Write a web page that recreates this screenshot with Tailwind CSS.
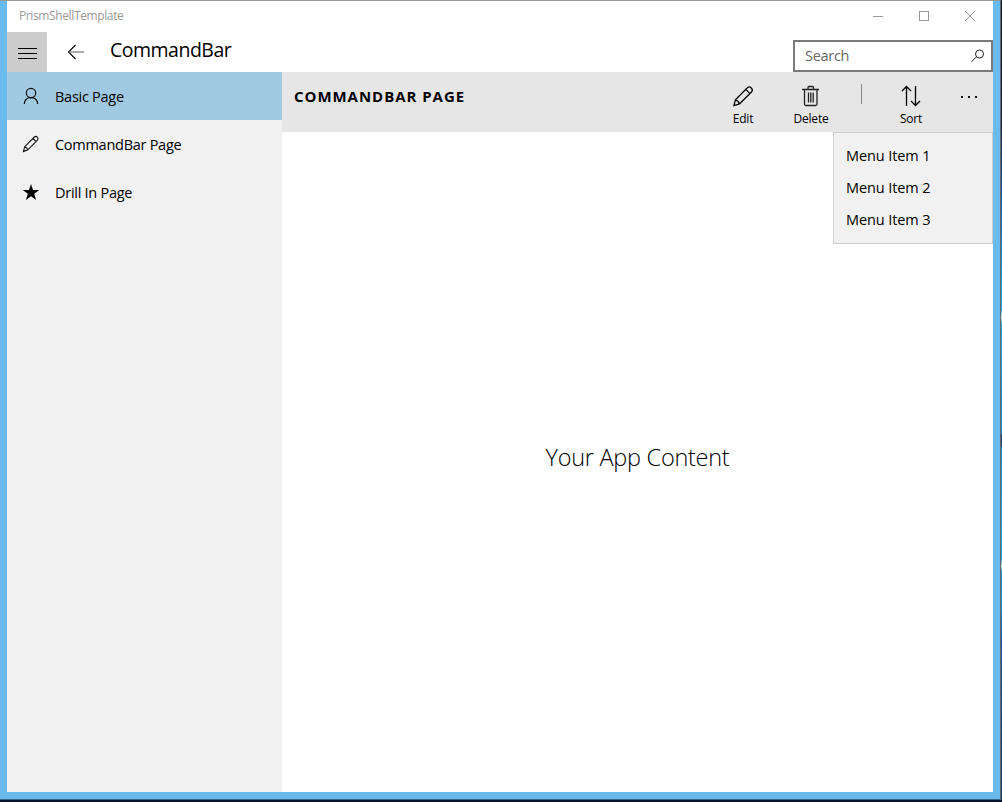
<!DOCTYPE html>
<html lang="en">
<head>
<meta charset="utf-8">
<title>PrismShellTemplate</title>
<script src="https://cdn.jsdelivr.net/npm/@tailwindcss/browser@4"></script>
</head>
<body class="w-[1002px] h-[802px] overflow-hidden bg-[#071d3c] font-['Open_Sans','Noto_Sans',sans-serif] text-black">
<div class="w-full h-full flex flex-col pr-px border-b-2 border-b-[#06152e] bg-[linear-gradient(180deg,#06152e_0px,#0a2b57_130px,#0b60b0_200px,#159ee0_270px,#1da9e0_310px,#d8eef5_317px,#1da9e0_325px,#1593d6_433px,#12407c_436px,#12407c_445px,#159ad9_448px,#1da9e0_560px,#d8eef5_566px,#1593d6_572px,#159ad9_600px,#0d5ba5_640px,#0a3c70_800px)]">
<div class="flex-1 min-h-0 flex flex-col bg-[#69baed] border-r border-t border-b border-r-[#65676b] border-t-[#96979a] border-b-[#35658d] pl-[7px] pr-[7px] pb-[7px]">
  <div class="flex-1 min-h-0 flex flex-col bg-white">
    <header class="h-[31px] shrink-0 flex items-center pl-3 text-[#999999]">
      <span class="text-[12px] leading-4 -mt-px tracking-[-0.38px] whitespace-nowrap flex-1">PrismShellTemplate</span>
      <svg class="w-[138px] h-[31px]" viewBox="0 0 138 31" fill="none" stroke="currentColor" shape-rendering="crispEdges">
        <path d="M18 15.500h10M64.500 10.500h9v9h-9z"/>
        <path d="M110 10l10 10M120 10l-10 10" shape-rendering="auto"/>
      </svg>
    </header>
    <div class="h-10 shrink-0 flex">
      <button class="w-10 h-10 bg-[#cccccc] flex items-center justify-center">
        <svg class="w-10 h-10" viewBox="0 0 40 40" stroke="#000" shape-rendering="crispEdges"><path d="M11 16.500h19M11 21.500h19M11 26.500h19"/></svg>
      </button>
      <svg class="w-[63px] h-10" viewBox="0 0 63 40" fill="none" stroke="#000" stroke-width="1.1"><path d="M28.500 13l-7 7 7 7"/><path d="M22 20h15" stroke="#666"/></svg>
      <h1 class="text-[19.5px] leading-6 pt-[6px] tracking-[-0.5px] flex-1 whitespace-nowrap">CommandBar</h1>
      <div class="w-[200px] h-8 mt-2 border-2 border-[#7a7a7a] bg-white flex items-center pl-2.5">
        <span class="text-[14.5px] leading-5 tracking-[-0.3px] text-[#666] flex-1">Search</span>
        <svg class="w-7 h-7" viewBox="0 0 28 28" fill="none" stroke="#222"><circle cx="16.500" cy="12" r="4"/><path d="M13.500 14.800L8.500 19.800"/></svg>
      </div>
    </div>
    <div class="flex-1 min-h-0 flex">
      <nav class="w-[275px] bg-[#f1f1f1] text-[14.5px] leading-5 tracking-[-0.27px] whitespace-nowrap">
        <a class="h-12 flex items-center bg-[#a1cae2]">
          <svg class="w-12 h-12" viewBox="0 0 48 48" fill="none" stroke="#111" stroke-width="1.2"><circle cx="24" cy="21" r="4.700"/><path d="M17.300 32c.3-4 3-6.300 6.700-6.300s6.400 2.300 6.700 6.300"/></svg>
          <span class="pt-0.5">Basic Page</span>
        </a>
        <a class="h-12 flex items-center">
          <svg class="w-12 h-12" viewBox="0 0 48 48" fill="none" stroke="#111" stroke-width="1.1"><path d="M16.500 31.500l1.200-4.800 9.700-9.700q1.400-1.200 2.900.2t.2 2.900l-9.700 9.700zM17.700 26.700q2.500.6 3.100 3.100M26 18.500l3.300 3.300"/></svg>
          <span class="pt-0.5">CommandBar Page</span>
        </a>
        <a class="h-12 flex items-center">
          <svg class="w-12 h-12" viewBox="0 0 48 48" fill="#000"><path d="M24 16l2 5.900h6.200l-5 3.800 1.900 6.300-5.100-3.800-5.100 3.800 1.900-6.300-5-3.800h6.200z"/></svg>
          <span class="pt-0.5">Drill In Page</span>
        </a>
      </nav>
      <main class="flex-1 flex flex-col relative">
        <div class="h-[60px] shrink-0 bg-[#e6e6e6] flex pl-3 text-[12px] leading-4 tracking-[-0.2px]">
          <h2 class="flex-1 text-[15px] leading-5 pt-[14px] font-bold tracking-[0.96px] whitespace-nowrap">COMMANDBAR PAGE</h2>
          <button class="w-[68px] flex flex-col items-center">
            <svg class="w-[68px] h-[39px]" viewBox="0 0 68 39" fill="none" stroke="#000" stroke-width="1.300"><path d="M25 33.500l1.400-5.700L38.600 15.600q1.800-1.500 3.700.4t.4 3.700L30.500 31.900zM26.400 27.800q3.200.9 4.100 4.100M36.800 17.400l4.200 4.200"/></svg>
            <span>Edit</span>
          </button>
          <button class="w-[68px] flex flex-col items-center">
            <svg class="w-[68px] h-[39px]" viewBox="0 0 68 39" fill="none" stroke="#222" stroke-width="1.300"><path d="M25 17.500h17M31 17v-1.500q0-1 1-1h3.500q1 0 1 1V17M27.500 17.500v14.500q0 1.500 1.500 1.500h9.500q1.500 0 1.500-1.500V17.500M31.500 20.500v10M33.800 20.500v10M36.200 20.500v10"/></svg>
            <span>Delete</span>
          </button>
          <div class="w-[33px] pl-4 pt-3"><div class="w-px h-5 bg-[#888]"></div></div>
          <button class="w-[66px] flex flex-col items-center">
            <svg class="w-[66px] h-[39px]" viewBox="0 0 66 39" fill="none" stroke="#000" stroke-width="1.300"><path d="M28.500 34V14.500M24 19l4.500-4.500L33 19M37.500 14v19.500M33 29l4.500 4.500L42 29"/></svg>
            <span>Sort</span>
          </button>
          <svg class="w-[49px] h-[60px]" viewBox="0 0 49 60" fill="#111" shape-rendering="crispEdges"><path d="M17 24h2v2h-2zM24 24h2v2h-2zM31 24h2v2h-2z"/></svg>
        </div>
        <div class="flex-1 flex items-center justify-center pb-2.5">
          <p class="text-[23.5px] leading-8 font-light tracking-[-0.27px] whitespace-nowrap">Your App Content</p>
        </div>
        <div class="absolute right-0 top-[60px] w-40 h-28 bg-[#f1f1f1] border border-[#ccc] pl-3 pt-[7px] text-[14.5px] leading-8 tracking-[-0.1px] whitespace-nowrap">
          <p>Menu Item 1</p><p>Menu Item 2</p><p>Menu Item 3</p>
        </div>
      </main>
    </div>
  </div>
</div>
</div>
</body>
</html>
